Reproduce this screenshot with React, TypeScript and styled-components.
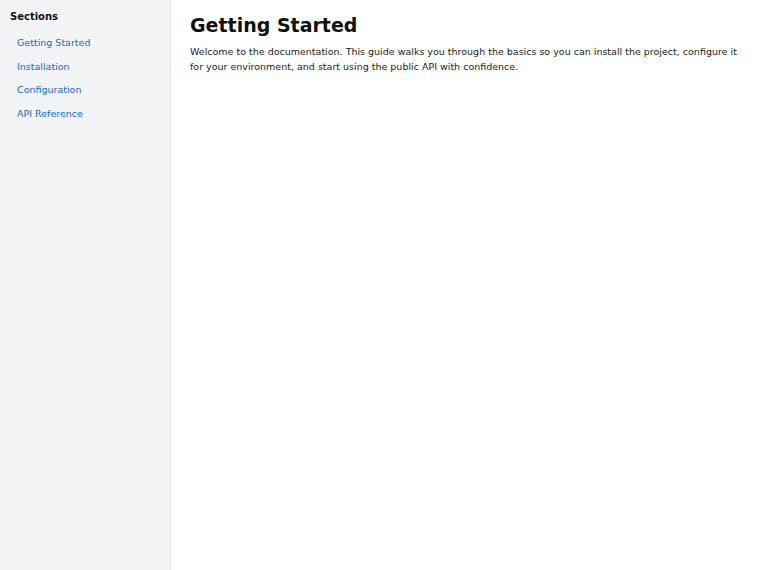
import styled, { createGlobalStyle } from "styled-components";

const GlobalStyle = createGlobalStyle`
  html, body, #root {
    height: 100%;
  }
  body {
    margin: 0;
    font-family: "DejaVu Sans", sans-serif;
    color: #1a1a1a;
    background: #ffffff;
  }
`;

const sections = [
  "Getting Started",
  "Installation",
  "Configuration",
  "API Reference",
];

export default function App() {
  return (
    <>
      <GlobalStyle />
      <Layout>
        <Sidebar>
          <SidebarTitle>Sections</SidebarTitle>
          <NavList>
            {sections.map((s) => (
              <li key={s}>
                <NavLink href="#">{s}</NavLink>
              </li>
            ))}
          </NavList>
        </Sidebar>
        <Main>
          <Title>Getting Started</Title>
          <Intro>
            Welcome to the documentation. This guide walks you through the
            basics so you can install the project, configure it for your
            environment, and start using the public API with confidence.
          </Intro>
        </Main>
      </Layout>
    </>
  );
}

const Layout = styled.div`
  display: flex;
  height: 100%;
`;

const Sidebar = styled.nav`
  width: 171px;
  flex-shrink: 0;
  background: #f3f4f6;
  border-right: 1px solid #dcdfe3;
  padding: 10px 10px;
  box-sizing: border-box;
`;

const SidebarTitle = styled.h2`
  margin: 0 0 13px;
  font-size: 10px;
  line-height: 13px;
  font-weight: bold;
  color: #111;
`;

const NavList = styled.ul`
  list-style: none;
  margin: 0;
  padding: 0 0 0 7px;
  display: flex;
  flex-direction: column;
  gap: 10px;
`;

const NavLink = styled.a`
  display: block;
  font-size: 9.5px;
  line-height: 13.7px;
  color: #1a66c9;
  text-decoration: none;
`;

const Main = styled.main`
  flex: 1;
  padding: 14px 12px 14px 19px;
`;

const Title = styled.h1`
  margin: 0 0 8px;
  font-size: 19px;
  line-height: 22px;
  font-weight: bold;
  color: #111;
`;

const Intro = styled.p`
  margin: 0;
  font-size: 9.5px;
  line-height: 15px;
  color: #222;
`;
